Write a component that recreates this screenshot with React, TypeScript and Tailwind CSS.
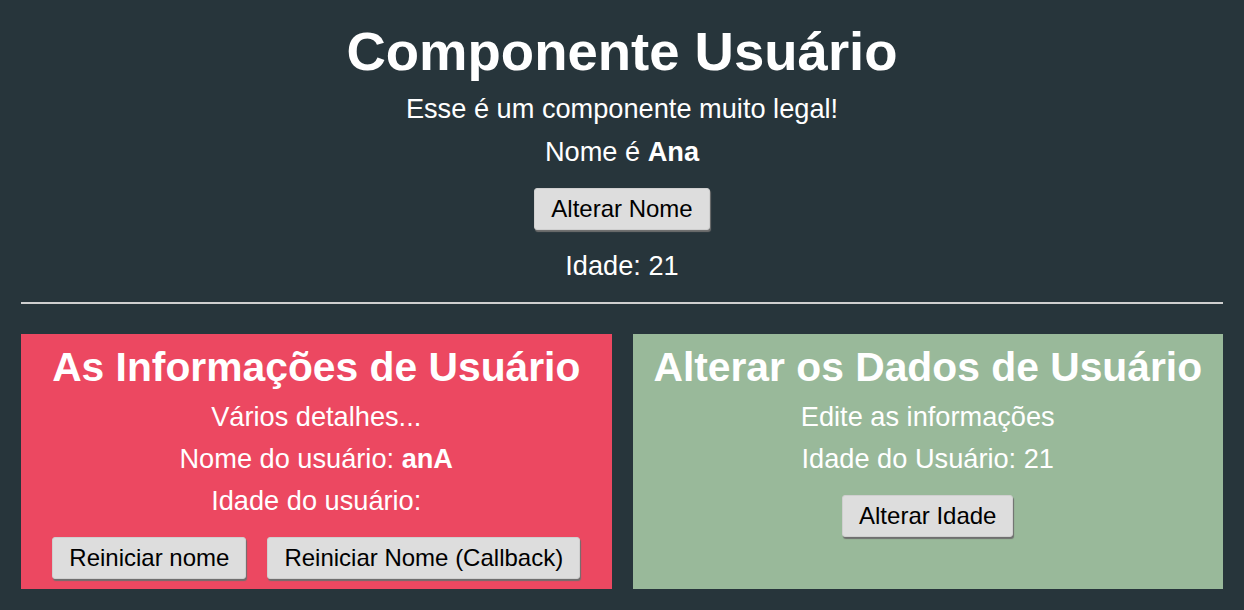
import { useState } from 'react';

const btn =
  'h-[42px] px-[16px] bg-[#dddddd] text-black text-[24px] leading-none rounded-[3px] border border-[#cfcfcf] shadow-[1px_2px_1px_#6f6f6f] cursor-pointer';

function UserInfo({ name, onReset, onResetCallback }: { name: string; onReset: () => void; onResetCallback: () => void }) {
  return (
    <div className="bg-[#ec4861] flex flex-col items-center pt-[10px] pb-[10px]">
      <h2 className="text-[40.8px] font-bold leading-[47px]">As Informações de Usuário</h2>
      <p className="mt-[5px] text-[27.2px] leading-[42px]">Vários detalhes...</p>
      <p className="text-[27.2px] leading-[42px]">
        Nome do usuário: <strong>{name}</strong>
      </p>
      <p className="text-[27.2px] leading-[42px]">Idade do usuário:</p>
      <div className="mt-[15px] flex gap-[21px]">
        <button className={btn} onClick={onReset}>Reiniciar nome</button>
        <button className={btn} onClick={onResetCallback}>Reiniciar Nome (Callback)</button>
      </div>
    </div>
  );
}

function UserEdit({ age, onChangeAge }: { age: number; onChangeAge: () => void }) {
  return (
    <div className="bg-[#99b99a] flex flex-col items-center pt-[10px] pb-[10px]">
      <h2 className="text-[40.8px] font-bold leading-[47px]">Alterar os Dados de Usuário</h2>
      <p className="mt-[5px] text-[27.2px] leading-[42px]">Edite as informações</p>
      <p className="text-[27.2px] leading-[42px]">Idade do Usuário: {age}</p>
      <div className="mt-[15px]">
        <button className={btn} onClick={onChangeAge}>Alterar Idade</button>
      </div>
    </div>
  );
}

export default function App() {
  const [name, setName] = useState('Ana');
  const [age, setAge] = useState(21);

  return (
    <div
      className="min-h-[610px] bg-[#27353b] text-white px-[21px] pt-[21px] pb-[22px] flex flex-col items-center"
      style={{ fontFamily: '"Liberation Sans", Arial, sans-serif' }}
    >
      <h1 className="text-[54.5px] font-bold leading-[62px]">Componente Usuário</h1>
      <p className="mt-[5px] text-[27.2px] leading-[42px]">Esse é um componente muito legal!</p>
      <p className="mt-[1px] text-[27.2px] leading-[42px]">
        Nome é <strong>{name}</strong>
      </p>
      <button className={`${btn} mt-[15px]`} onClick={() => setName('anA')}>Alterar Nome</button>
      <p className="mt-[15px] text-[27.2px] leading-[42px]">Idade: {age}</p>
      <div className="mt-[15px] h-[2px] w-full bg-[#cfcfcf]" />
      <div className="mt-[30px] w-full grid grid-cols-2 gap-[21px] text-center">
        <UserInfo name="anA" onReset={() => setName('Ana')} onResetCallback={() => setName('Ana')} />
        <UserEdit age={age} onChangeAge={() => setAge(age + 1)} />
      </div>
    </div>
  );
}
